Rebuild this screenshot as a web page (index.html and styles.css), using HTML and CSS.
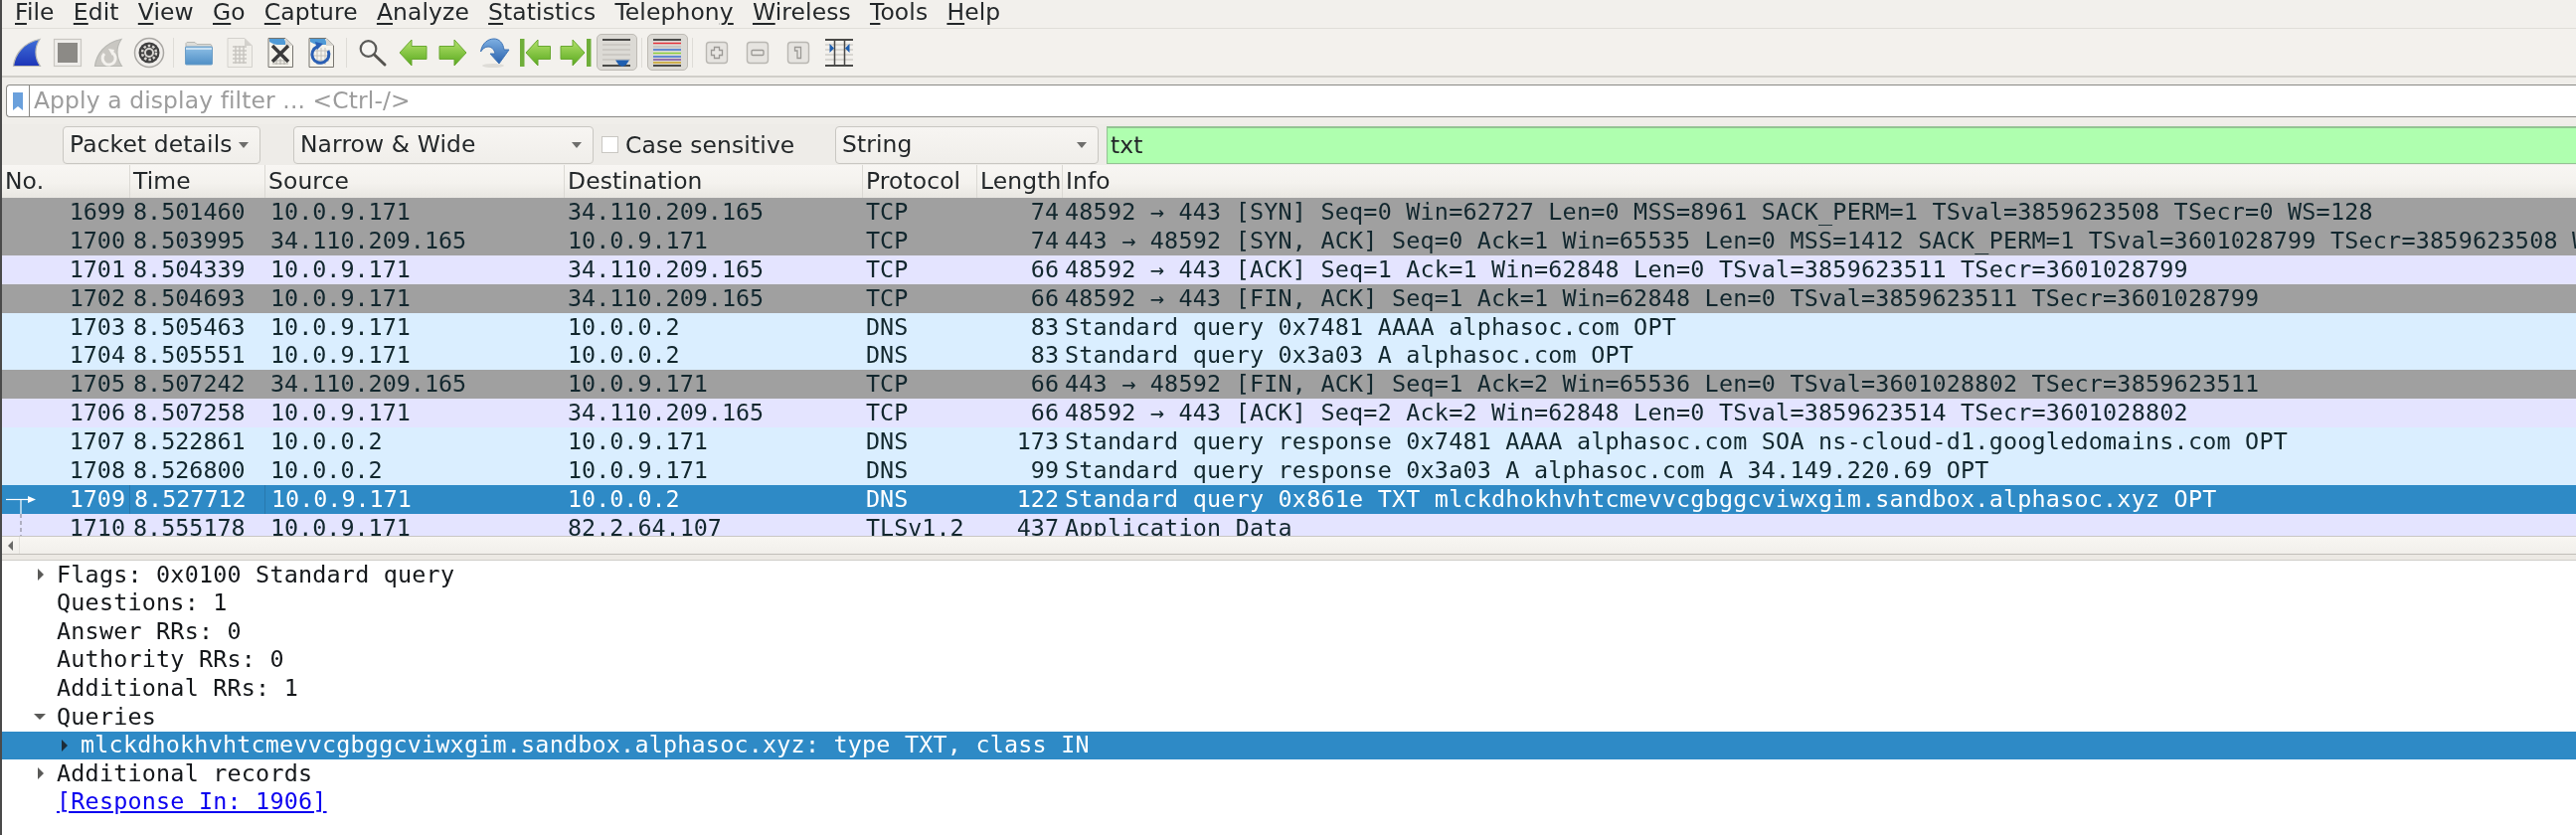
FILE: index.html
```html
<!DOCTYPE html>
<html lang="en">
<head>
<meta charset="utf-8">
<title>Wireshark</title>
<link rel="stylesheet" href="styles.css">
</head>
<body>
<svg class="defs" aria-hidden="true"><defs>
<linearGradient id="gShark" x1="0" y1="0" x2="0" y2="1"><stop offset="0" stop-color="#3f6fd8"/><stop offset="1" stop-color="#1d35b8"/></linearGradient>
<linearGradient id="gGreen" x1="0" y1="0" x2="0" y2="1"><stop offset="0" stop-color="#b4e36c"/><stop offset="1" stop-color="#58a81e"/></linearGradient>
<linearGradient id="gBlue" x1="0" y1="0" x2="0" y2="1"><stop offset="0" stop-color="#7fb0e2"/><stop offset="1" stop-color="#2a62ae"/></linearGradient>
<linearGradient id="gFolder" x1="0" y1="0" x2="0" y2="1"><stop offset="0" stop-color="#8fc0e6"/><stop offset="1" stop-color="#4f8fc6"/></linearGradient>
</defs></svg>
<div class="app">
  <nav class="menubar">
    <span class="menu"><u>F</u>ile</span><span class="menu"><u>E</u>dit</span><span class="menu"><u>V</u>iew</span><span class="menu"><u>G</u>o</span><span class="menu"><u>C</u>apture</span><span class="menu"><u>A</u>nalyze</span><span class="menu"><u>S</u>tatistics</span><span class="menu">Telephon<u>y</u></span><span class="menu"><u>W</u>ireless</span><span class="menu"><u>T</u>ools</span><span class="menu"><u>H</u>elp</span>
  </nav>

  <div class="toolbar">
    <span class="tb"><svg class="ico" viewBox="0 0 32 32"><path d="M2.500 29.500C4 18 12 6 29 2.500C24 10 23 20 29.500 29.500Z" fill="url(#gShark)" stroke="#b9b9b4" stroke-width="1.200"/></svg></span>
    <span class="tb"><svg class="ico" viewBox="0 0 32 32"><rect x="2.500" y="2.500" width="27" height="27" fill="#efedea" stroke="#c9c7c2" stroke-width="1.200"/><rect x="6" y="6" width="20" height="20" fill="#8c8a86"/></svg></span>
    <span class="tb"><svg class="ico" viewBox="0 0 32 32"><path d="M2.500 29.500C4 18 12 6 29 2.500C24 10 23 20 29.500 29.500Z" fill="#c9c7c2" stroke="#b9b9b4" stroke-width="1.200"/><path d="M12 17a6.500 6.500 0 1 0 8-1" fill="none" stroke="#f4f2ee" stroke-width="3"/><path d="M16 12l6 1-2 6z" fill="#f4f2ee"/></svg></span>
    <span class="tb"><svg class="ico" viewBox="0 0 32 32"><circle cx="16" cy="16" r="14.500" fill="#f1efec" stroke="#a9a7a3" stroke-width="1.500"/><circle cx="16" cy="16" r="10.500" fill="#3f3f3f"/><circle cx="16" cy="16" r="7" fill="none" stroke="#d8d6d2" stroke-width="2.500" stroke-dasharray="2.500 2"/><circle cx="16" cy="16" r="5" fill="#d8d6d2"/><circle cx="16" cy="16" r="3" fill="#3f3f3f"/></svg></span>
    <span class="sep sep-a"></span>
    <span class="tb"><svg class="ico" viewBox="0 0 32 32"><path d="M3 9V6.500L4 5.500H12L14 7.500H28L29 9V12H3Z" fill="#dcdcd8" stroke="#b8b8b4"/><rect x="2.500" y="10" width="27" height="18" rx="1" fill="url(#gFolder)" stroke="#6b9dc6"/><path d="M3 11h26v2H3z" fill="#c9e0f2"/></svg></span>
    <span class="tb"><svg class="ico" viewBox="0 0 32 32"><path d="M4 1.500H21L28.500 9V30.500H4Z" fill="#f1efea" stroke="#d4d2cd"/><path d="M21 1.500V9H28.500Z" fill="#d3d1cc"/><path d="M9 10h14M9 14h14M9 18h14M9 22h14M9 26h14M12 9v18M16 9v18M20 9v18" stroke="#c8c6c1" stroke-width="1.500" fill="none"/></svg></span>
    <span class="tb"><svg class="ico" viewBox="0 0 32 32"><path d="M4 1.500H21L28.500 9V30.500H4Z" fill="#f5f3ec" stroke="#77756f"/><path d="M5 2H20L22 8H13C11 8 8 7 5 5Z" fill="#4f9ad6"/><path d="M21 1.500V9H28.500Z" fill="#d8d6d0"/><path d="M8 24h16M8 27h16M12 22v6M16 22v6M20 22v6" stroke="#b0aea8"/><path d="M8 9L24 25M24 9L8 25" stroke="#3a3a3a" stroke-width="3.400"/></svg></span>
    <span class="tb"><svg class="ico" viewBox="0 0 32 32"><path d="M4 1.500H21L28.500 9V30.500H4Z" fill="#f5f3ec" stroke="#77756f"/><path d="M5 2H20L22 8H13C11 8 8 7 5 5Z" fill="#4f9ad6"/><path d="M21 1.500V9H28.500Z" fill="#d8d6d0"/><path d="M8 14h16M8 19h16M8 24h16M12 11v17M16 11v17M20 11v17" stroke="#c2c0ba"/><path d="M12 10A8.500 8.500 0 1 0 23 14" fill="none" stroke="#2a5fb4" stroke-width="3"/><path d="M10 5l8 2-6 6z" fill="#2a5fb4"/></svg></span>
    <span class="sep sep-b"></span>
    <span class="tb"><svg class="ico" viewBox="0 0 32 32"><circle cx="12.500" cy="12" r="7.800" fill="#f6f5f2" stroke="#5a5a58" stroke-width="2.200"/><path d="M18.500 18l10.500 10" stroke="#55534f" stroke-width="3" stroke-linecap="round"/></svg></span>
    <span class="tb"><svg class="ico" viewBox="0 0 32 32"><path d="M3 16L15 3V9.500H30V22.500H15V29Z" fill="url(#gGreen)" stroke="#6aa832"/></svg></span>
    <span class="tb"><svg class="ico" viewBox="0 0 32 32"><path d="M29 16L17 3V9.500H2V22.500H17V29Z" fill="url(#gGreen)" stroke="#6aa832"/></svg></span>
    <span class="tb"><svg class="ico" viewBox="0 0 32 32"><ellipse cx="15" cy="29" rx="11" ry="2" fill="#dedcd7"/><path d="M2.500 15C4 6 10 2 16 2C21 2 25 6 26 13H31L21 27L12 17H17C16 12 13 10 10 10C7 10 4.500 12 2.500 15Z" fill="url(#gBlue)" stroke="#3f74b5"/></svg></span>
    <span class="tb"><svg class="ico" viewBox="0 0 32 32"><rect x="1" y="2" width="4.500" height="28" fill="#6fae3a"/><path d="M7 16L19 3V9.500H31.500V22.500H19V29Z" fill="url(#gGreen)" stroke="#6aa832"/></svg></span>
    <span class="tb"><svg class="ico" viewBox="0 0 32 32"><rect x="27" y="2" width="4.500" height="28" fill="#6fae3a"/><path d="M25 16L13 3V9.500H1V22.500H13V29Z" fill="url(#gGreen)" stroke="#6aa832"/></svg></span>
    <span class="tb on"><svg class="ico" viewBox="0 0 32 32"><path d="M2 8h28M2 13h28M2 18h28M2 23h28" stroke="#c6c4bf" stroke-width="1.400"/><path d="M2 3h28M2 29h28" stroke="#4a4a48" stroke-width="1.800"/><path d="M15 23.500H29L25.500 28.500L22 30L18.500 28.500Z" fill="#1f5fb0"/></svg></span>
    <span class="sep sep-c"></span>
    <span class="tb on"><svg class="ico" viewBox="0 0 32 32"><path d="M2 3h28M2 29h28" stroke="#4a4a48" stroke-width="1.800"/><path d="M2 6.500h28" stroke="#e5323a" stroke-width="1.500"/><path d="M2 10h28" stroke="#bdbbb6" stroke-width="1.200"/><path d="M2 13h28" stroke="#3a6fd0" stroke-width="1.500"/><path d="M2 16.500h28" stroke="#8ccf3c" stroke-width="1.500"/><path d="M2 20h28" stroke="#3a6fd0" stroke-width="1.500"/><path d="M2 23h28" stroke="#7c4fa0" stroke-width="1.500"/><path d="M2 26h28" stroke="#caa020" stroke-width="1.500"/></svg></span>
    <span class="sep sep-d"></span>
    <span class="tb"><svg class="ico" viewBox="0 0 32 32"><rect x="5.500" y="5.500" width="21" height="21" rx="3" fill="#e6e4e0" stroke="#b9b7b2" stroke-width="1.400"/><path d="M13.500 10.500h5v3h3v5h-3v3h-5v-3h-3v-5h3z" fill="#e9e7e3" stroke="#9b9995" stroke-width="1.300"/></svg></span>
    <span class="tb"><svg class="ico" viewBox="0 0 32 32"><rect x="5.500" y="5.500" width="21" height="21" rx="3" fill="#e6e4e0" stroke="#b9b7b2" stroke-width="1.400"/><rect x="10" y="13.500" width="12" height="5" rx="1" fill="#e9e7e3" stroke="#9b9995" stroke-width="1.300"/></svg></span>
    <span class="tb"><svg class="ico" viewBox="0 0 32 32"><rect x="5.500" y="5.500" width="21" height="21" rx="3" fill="#e6e4e0" stroke="#b9b7b2" stroke-width="1.400"/><path d="M12.500 10.500H18.500V21.500H15V14H12.500Z" fill="#e9e7e3" stroke="#9b9995" stroke-width="1.300"/></svg></span>
    <span class="tb"><svg class="ico" viewBox="0 0 32 32"><path d="M2 8h28M2 13h28M2 18h28M2 23h28" stroke="#bdbbb6" stroke-width="1.200"/><path d="M2 3h28M2 29h28" stroke="#4a4a48" stroke-width="1.800"/><path d="M11.500 3v26M21.500 3v26" stroke="#4a4a48" stroke-width="1.500"/><path d="M6.500 7L11 11.500L6.500 16ZM26.500 7L22 11.500L26.500 16Z" fill="#1f5fb0"/></svg></span>
  </div>

  <div class="filterbar">
    <div class="filter">
      <span class="bookmark"><svg class="bm" viewBox="0 0 10 18"><path d="M0 0H10V18L5 14L0 18Z" fill="#6aa0dc"/></svg></span>
      <span class="placeholder">Apply a display filter ... &lt;Ctrl-/&gt;</span>
    </div>
  </div>

  <div class="findbar">
    <div class="combo combo-details">Packet details<span class="caret"></span></div>
    <div class="combo combo-width">Narrow &amp; Wide<span class="caret"></span></div>
    <span class="check"></span>
    <span class="check-label">Case sensitive</span>
    <div class="combo combo-type">String<span class="caret"></span></div>
    <div class="findinput">txt</div>
  </div>

  <div class="header cols">
    <span class="hcell">No.</span><span class="hcell">Time</span><span class="hcell">Source</span><span class="hcell">Destination</span><span class="hcell">Protocol</span><span class="hcell">Length</span><span class="hcell">Info</span>
  </div>

  <div class="packets">
    <div class="row cols grey"><span class="no">1699</span><span class="c">8.501460</span><span class="c src">10.0.9.171</span><span class="c">34.110.209.165</span><span class="c">TCP</span><span class="len">74</span><span class="info">48592 → 443 [SYN] Seq=0 Win=62727 Len=0 MSS=8961 SACK_PERM=1 TSval=3859623508 TSecr=0 WS=128</span></div>
    <div class="row cols grey"><span class="no">1700</span><span class="c">8.503995</span><span class="c src">34.110.209.165</span><span class="c">10.0.9.171</span><span class="c">TCP</span><span class="len">74</span><span class="info">443 → 48592 [SYN, ACK] Seq=0 Ack=1 Win=65535 Len=0 MSS=1412 SACK_PERM=1 TSval=3601028799 TSecr=3859623508 WS=128</span></div>
    <div class="row cols tcp"><span class="no">1701</span><span class="c">8.504339</span><span class="c src">10.0.9.171</span><span class="c">34.110.209.165</span><span class="c">TCP</span><span class="len">66</span><span class="info">48592 → 443 [ACK] Seq=1 Ack=1 Win=62848 Len=0 TSval=3859623511 TSecr=3601028799</span></div>
    <div class="row cols grey"><span class="no">1702</span><span class="c">8.504693</span><span class="c src">10.0.9.171</span><span class="c">34.110.209.165</span><span class="c">TCP</span><span class="len">66</span><span class="info">48592 → 443 [FIN, ACK] Seq=1 Ack=1 Win=62848 Len=0 TSval=3859623511 TSecr=3601028799</span></div>
    <div class="row cols dns"><span class="no">1703</span><span class="c">8.505463</span><span class="c src">10.0.9.171</span><span class="c">10.0.0.2</span><span class="c">DNS</span><span class="len">83</span><span class="info">Standard query 0x7481 AAAA alphasoc.com OPT</span></div>
    <div class="row cols dns"><span class="no">1704</span><span class="c">8.505551</span><span class="c src">10.0.9.171</span><span class="c">10.0.0.2</span><span class="c">DNS</span><span class="len">83</span><span class="info">Standard query 0x3a03 A alphasoc.com OPT</span></div>
    <div class="row cols grey"><span class="no">1705</span><span class="c">8.507242</span><span class="c src">34.110.209.165</span><span class="c">10.0.9.171</span><span class="c">TCP</span><span class="len">66</span><span class="info">443 → 48592 [FIN, ACK] Seq=1 Ack=2 Win=65536 Len=0 TSval=3601028802 TSecr=3859623511</span></div>
    <div class="row cols tcp"><span class="no">1706</span><span class="c">8.507258</span><span class="c src">10.0.9.171</span><span class="c">34.110.209.165</span><span class="c">TCP</span><span class="len">66</span><span class="info">48592 → 443 [ACK] Seq=2 Ack=2 Win=62848 Len=0 TSval=3859623514 TSecr=3601028802</span></div>
    <div class="row cols dns"><span class="no">1707</span><span class="c">8.522861</span><span class="c src">10.0.0.2</span><span class="c">10.0.9.171</span><span class="c">DNS</span><span class="len">173</span><span class="info">Standard query response 0x7481 AAAA alphasoc.com SOA ns-cloud-d1.googledomains.com OPT</span></div>
    <div class="row cols dns"><span class="no">1708</span><span class="c">8.526800</span><span class="c src">10.0.0.2</span><span class="c">10.0.9.171</span><span class="c">DNS</span><span class="len">99</span><span class="info">Standard query response 0x3a03 A alphasoc.com A 34.149.220.69 OPT</span></div>
    <div class="row cols sel"><span class="no"><svg class="rel" viewBox="0 0 30 29"><path d="M17 14.500V29" stroke="#fff" stroke-width="1.200"/><path d="M2 14.500H24" stroke="#fff" stroke-width="1.200"/><path d="M24 11L32 14.500L24 18Z" fill="#fff"/></svg>1709</span><span class="c div">8.527712</span><span class="c src div">10.0.9.171</span><span class="c">10.0.0.2</span><span class="c">DNS</span><span class="len">122</span><span class="info">Standard query 0x861e TXT mlckdhokhvhtcmevvcgbggcviwxgim.sandbox.alphasoc.xyz OPT</span></div>
    <div class="row cols tcp"><span class="no"><svg class="rel" viewBox="0 0 30 29"><path d="M17 0V29" stroke="#8d8d99" stroke-width="1.200" stroke-dasharray="4 3"/></svg>1710</span><span class="c">8.555178</span><span class="c src">10.0.9.171</span><span class="c">82.2.64.107</span><span class="c">TLSv1.2</span><span class="len">437</span><span class="info">Application Data</span></div>
  </div>

  <div class="hscroll"><span class="sb-btn"><span class="sb-arrow"></span></span></div>
  <div class="splitter"></div>

  <div class="details">
    <div class="line"><span class="tw right"></span>Flags: 0x0100 Standard query</div>
    <div class="line"><span class="tw"></span>Questions: 1</div>
    <div class="line"><span class="tw"></span>Answer RRs: 0</div>
    <div class="line"><span class="tw"></span>Authority RRs: 0</div>
    <div class="line"><span class="tw"></span>Additional RRs: 1</div>
    <div class="line"><span class="tw down"></span>Queries</div>
    <div class="line child selected"><span class="tw right"></span>mlckdhokhvhtcmevvcgbggcviwxgim.sandbox.alphasoc.xyz: type TXT, class IN</div>
    <div class="line"><span class="tw right"></span>Additional records</div>
    <div class="line"><span class="tw"></span><a class="link" href="#">[Response In: 1906]</a></div>
  </div>
</div>
</body>
</html>
```

FILE: styles.css
```css
* { box-sizing: border-box; }
html, body { margin: 0; height: 100%; overflow: hidden; background: #fff; }
.defs { position: absolute; width: 0; height: 0; }
.app {
  --cols: 128px 136px 301px 300px 115px 86px 1fr;
  width: 2591px;
  height: 840px;
  display: flex;
  flex-direction: column;
  border-left: 2px solid #4a4a4a;
  font: 23.4px/1 "DejaVu Sans", sans-serif;
  letter-spacing: .12px;
  color: #232729;
  background: #f0eeea;
  filter: blur(.4px);
  overflow: hidden;
}

/* menu */
.menubar {
  height: 29px;
  flex: none;
  display: flex;
  gap: 19.2px;
  padding-left: 13px;
  line-height: 24px;
  background: #f2f0ec;
  border-bottom: 1px solid #e0ded9;
}
.menu u { text-underline-offset: 3px; text-decoration-thickness: 2px; }

/* toolbar */
.toolbar {
  height: 49px;
  flex: none;
  display: flex;
  align-items: center;
  padding-left: 4px;
  background: #f3f1ed;
  border-bottom: 2px solid #d0cec9;
}
.tb {
  width: 41px;
  height: 37px;
  flex: none;
  display: flex;
  align-items: center;
  justify-content: center;
}
.tb.on {
  background: #dcdad5;
  border: 1.5px solid #bdbab4;
  border-radius: 5px;
}
.ico { width: 32px; height: 32px; flex: none; }
.sep { flex: none; height: 30px; display: flex; justify-content: center; }
.sep::after { content: ""; width: 1px; background: #dedcd7; }
.sep-a { width: 9px; }
.sep-b { width: 10.5px; }
.sep-c { width: 10px; }
.sep-d { width: 9px; }

/* display filter */
.filterbar {
  height: 47px;
  flex: none;
  padding: 7px 0 7px 4px;
  background: #f0eeea;
}
.filter {
  height: 33px;
  display: flex;
  align-items: center;
  background: #fff;
  border: 1.5px solid #8b8a86;
  border-right: 0;
  border-radius: 4px 0 0 4px;
}
.bookmark {
  width: 23px;
  height: 100%;
  flex: none;
  display: flex;
  align-items: center;
  justify-content: center;
  border-right: 1.5px solid #8b8a86;
}
.bm { width: 10px; height: 18px; }
.placeholder { padding-left: 4px; color: #9c9c9c; }

/* find bar */
.findbar {
  height: 41px;
  flex: none;
  display: flex;
  align-items: flex-start;
  padding: 2px 0 0 61px;
  background: #eeece8;
}
.combo {
  height: 38px;
  flex: none;
  display: flex;
  align-items: center;
  justify-content: space-between;
  padding: 0 11px 0 6px;
  background: linear-gradient(#f7f5f2, #f0eeea);
  border: 1px solid #c9c7c2;
  border-radius: 4px;
}
.combo-details { width: 199px; margin-right: 33px; }
.combo-width { width: 302px; margin-right: 8px; }
.combo-type { width: 265px; margin-right: 8px; }
.caret {
  width: 0;
  height: 0;
  border: 5px solid transparent;
  border-top: 6px solid #6e6e6c;
  border-bottom: 0;
}
.check {
  width: 17px;
  height: 17px;
  flex: none;
  margin: 10px 7px 0 0;
  background: #fff;
  border: 1px solid #c9c7c2;
}
.check-label { width: 211px; flex: none; line-height: 38px; }
.findinput {
  flex: 1;
  height: 38px;
  padding-left: 3px;
  line-height: 35px;
  background: #afffaf;
  border-top: 2px solid #93c393;
  border-bottom: 1.5px solid #93c393;
  border-left: 1px solid #93c393;
}

/* packet list */
.cols { display: grid; grid-template-columns: var(--cols); }
.header {
  height: 33px;
  flex: none;
  line-height: 33px;
  background: linear-gradient(#f8f6f3 0, #f4f2ee 55%, #e9e7e2 100%);
}
.hcell { padding-left: 3px; border-left: 1px solid #dbd9d4; white-space: nowrap; }
.hcell:first-child { border-left: 0; }
.packets {
  height: 341px;
  flex: none;
  overflow: hidden;
  border-bottom: 1px solid #c9c7c4;
  font-family: "DejaVu Sans Mono", monospace;
  letter-spacing: 0;
}
.row { height: 28.9px; line-height: 29px; white-space: nowrap; color: #12272e; }
.grey { background: #a0a0a0; }
.tcp { background: #e4e4ff; }
.dns { background: #daeeff; }
.sel { background: #2e8ac6; color: #fff; }
.no { position: relative; display: block; padding-right: 4px; text-align: right; }
.c { padding-left: 4px; }
.src { padding-left: 6px; }
.div { border-left: 1px solid #2878ad; }
.len { padding-right: 3px; text-align: right; }
.info { padding-left: 3px; letter-spacing: .22px; }
.rel { position: absolute; left: 2px; top: 0; width: 30px; height: 29px; overflow: visible; }

/* horizontal scrollbar and splitter */
.hscroll {
  height: 17px;
  flex: none;
  display: flex;
  background: linear-gradient(#f8f6f2, #f1efeb);
}
.sb-btn {
  width: 18px;
  display: flex;
  align-items: center;
  justify-content: center;
  border-right: 1px solid #e3e1dc;
}
.sb-arrow {
  width: 0;
  height: 0;
  border: 5px solid transparent;
  border-right: 5px solid #6a6a68;
  border-left: 0;
}
.splitter {
  height: 7px;
  flex: none;
  background: #ece9e4;
  border-top: 1px solid #c2bfba;
  border-bottom: 1px solid #d0cec9;
}

/* packet details */
.details {
  flex: 1;
  background: #fff;
  font-family: "DejaVu Sans Mono", monospace;
  letter-spacing: .21px;
  color: #14171a;
}
.line {
  height: 28.6px;
  display: flex;
  align-items: center;
  padding-left: 32px;
  white-space: nowrap;
}
.tw { width: 23px; height: 12px; flex: none; display: block; position: relative; }
.right::before, .down::before {
  content: "";
  position: absolute;
  width: 0;
  height: 0;
}
.right::before { left: 4px; top: 0; border: 6px solid transparent; border-left: 6px solid #5a5a58; border-right: 0; }
.down::before { left: 0; top: 3px; border: 6px solid transparent; border-top: 6.5px solid #5a5a58; border-bottom: 0; }
.child { padding-left: 56px; }
.selected { background: #2e8ac6; color: #fff; }
.selected .right::before { border-left-color: #1c2c38; }
.link { color: #0b00f0; text-decoration: underline; }
```
